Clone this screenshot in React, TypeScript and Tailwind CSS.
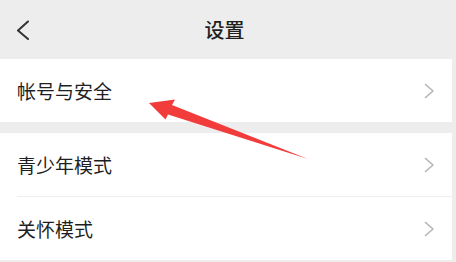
const cjk = { fontFamily: '"Noto Sans CJK SC", "Noto Sans", sans-serif' }

function Chevron() {
  return (
    <svg width="11" height="16" viewBox="0 0 11 16" fill="none">
      <path d="M1.5 1.5 L9 8 L1.5 14.5" stroke="#b4b4b4" strokeWidth="1.6" strokeLinecap="round" strokeLinejoin="round" />
    </svg>
  )
}

function Row({ label, divider }: { label: string; divider?: boolean }) {
  return (
    <div className="bg-white">
      <div className="h-[63px] flex items-center justify-between pl-[17px] pr-[17px]">
        <span className="text-[19px] leading-none text-[#1f1f1f]">{label}</span>
        <Chevron />
      </div>
      {divider && <div className="ml-[17px] h-px bg-[#eeeeee]" />}
    </div>
  )
}

export default function App() {
  return (
    <div className="relative w-[456px] h-[262px] bg-[#ededed] overflow-hidden" style={cjk}>
      {/* Header */}
      <div className="h-[59px] flex items-center">
        <div className="w-[45px] pl-[16px]">
          <svg width="14" height="20" viewBox="0 0 14 20" fill="none">
            <path d="M12 1.5 L2 10.5 L12 19" stroke="#333" strokeWidth="2" strokeLinecap="round" strokeLinejoin="round" />
          </svg>
        </div>
        <div className="flex-1 text-center text-[20px] font-medium leading-none text-[#1f1f1f]">设置</div>
        <div className="w-[52px]" />
      </div>

      {/* List */}
      <div className="mr-[4px]">
        <Row label="帐号与安全" />
        <div className="h-[11px]" />
        <Row label="青少年模式" divider />
        <Row label="关怀模式" />
      </div>

      {/* Annotation arrow */}
      <svg className="absolute inset-0 pointer-events-none" width="456" height="262" viewBox="0 0 456 262">
        <polygon
          points="149,103 175,99.5 172,105 308,159 168,114.5 165.5,119.5"
          fill="#f23b3b"
        />
      </svg>
    </div>
  )
}
